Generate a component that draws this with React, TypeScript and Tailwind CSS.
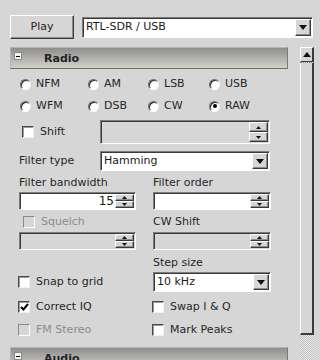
const sunken =
  "border border-t-[#7c7c7c] border-l-[#7c7c7c] border-b-white border-r-white shadow-[inset_1px_1px_0_#3a3a3a]";
const raised =
  "border border-t-white border-l-white border-b-[#3a3a3a] border-r-[#3a3a3a] shadow-[inset_-1px_-1px_0_#8c8c8c]";

function Tri({ up = false, size = "sm" }: { up?: boolean; size?: "sm" | "md" }) {
  const w = size === "sm" ? 5 : 8;
  const h = size === "sm" ? 3 : 5;
  return (
    <svg width={w} height={h} viewBox={`0 0 ${w} ${h}`}>
      <polygon
        points={up ? `0,${h} ${w},${h} ${w / 2},0` : `0,0 ${w},0 ${w / 2},${h}`}
        fill="#111"
      />
    </svg>
  );
}

function SpinBox({
  value = "",
  disabled = false,
  className = "",
}: {
  value?: string;
  disabled?: boolean;
  className?: string;
}) {
  return (
    <div className={`flex ${sunken} ${disabled ? "bg-[#d6d6d6]" : "bg-white"} ${className}`}>
      <div className="flex flex-1 items-center justify-end pr-[1px] text-[12px] text-[#1a1a1a]">
        {value}
      </div>
      <div className="flex w-[20px] flex-col py-[1px] pr-[1px]">
        <div className={`flex flex-1 items-center justify-center bg-[#d6d6d6] ${raised}`}>
          <Tri up />
        </div>
        <div className={`flex flex-1 items-center justify-center bg-[#d6d6d6] ${raised}`}>
          <Tri />
        </div>
      </div>
    </div>
  );
}

function Combo({ text, className = "" }: { text: string; className?: string }) {
  return (
    <div className={`flex bg-white ${sunken} ${className}`}>
      <div className="flex flex-1 items-center pl-[3px] text-[#1a1a1a]">{text}</div>
      <div className={`my-[1px] mr-[1px] flex w-[16px] items-center justify-center bg-[#d6d6d6] ${raised}`}>
        <Tri size="md" />
      </div>
    </div>
  );
}

function Radio({ label, checked = false }: { label: string; checked?: boolean }) {
  return (
    <div className="flex items-center gap-[5px]">
      <div className="flex h-[11px] w-[11px] items-center justify-center rounded-full border border-[#6a6a6a] border-b-white border-r-[#f2f2f2] bg-white shadow-[inset_1px_1px_0_#2a2a2a]">
        {checked && <div className="h-[4px] w-[4px] rounded-full bg-black" />}
      </div>
      <span>{label}</span>
    </div>
  );
}

function Check({
  label,
  checked = false,
  disabled = false,
}: {
  label: string;
  checked?: boolean;
  disabled?: boolean;
}) {
  return (
    <div className="flex items-center gap-[6px]">
      <div
        className={`flex h-[12px] w-[12px] items-center justify-center border ${
          disabled
            ? "border-[#8a8a8a] border-b-white border-r-white bg-[#d6d6d6]"
            : "border-[#4a4a4a] border-b-[#f0f0f0] border-r-[#f0f0f0] bg-white shadow-[inset_1px_1px_0_#9a9a9a]"
        }`}
      >
        {checked && (
          <svg width="9" height="8" viewBox="0 0 9 8">
            <path d="M1 4 L3.5 6.5 L8 1" stroke="#000" strokeWidth="2" fill="none" />
          </svg>
        )}
      </div>
      <span className={disabled ? "text-[#8c8c8c]" : ""}>{label}</span>
    </div>
  );
}

function Header({ title }: { title: string }) {
  return (
    <div className="flex h-[22px] border border-t-[#b4b4b4] border-l-[#b4b4b4] border-b-[#6a6a6a] border-r-[#7a7a7a] bg-gradient-to-b from-[#8e8e8e] to-[#d3d1c9]">
      <div className="ml-[3px] mt-[4px] flex h-[8px] w-[8px] items-center justify-center border border-[#8a8a8a] bg-[#f4f4f4]">
        <div className="h-[1px] w-[4px] bg-black" />
      </div>
      <span className="ml-[22px] mt-[3px] font-bold text-[#222]">{title}</span>
    </div>
  );
}

export default function App() {
  return (
    <div className="h-[360px] w-[320px] overflow-hidden bg-[#d6d6d6] font-['DejaVu_Sans',sans-serif] text-[11px] text-[#262626]">
      <div className="flex items-center gap-[8px] pl-[10px] pt-[15px]">
        <button className={`h-[24px] w-[64px] bg-[#d6d6d6] text-[#222] ${raised}`}>Play</button>
        <Combo text="RTL-SDR / USB" className="h-[21px] w-[231px]" />
      </div>

      <div className="mt-[8px] flex">
        <div className="ml-[10px] w-[278px]">
          <Header title="Radio" />

          <div className="mt-[4px] grid grid-cols-[68px_60px_61px_auto] pl-[10px]">
            {["NFM", "AM", "LSB", "USB", "WFM", "DSB", "CW", "RAW"].map((m) => (
              <div key={m} className="flex h-[22px] items-center">
                <Radio label={m} checked={m === "RAW"} />
              </div>
            ))}
          </div>

          <div className="mt-[3px] flex h-[24px] items-center">
            <div className="w-[90px] pl-[12px]">
              <Check label="Shift" />
            </div>
            <SpinBox disabled className="h-[24px] w-[170px]" />
          </div>

          <div className="mt-[7px] flex h-[20px] items-center">
            <span className="w-[90px] pl-[9px]">Filter type</span>
            <Combo text="Hamming" className="h-[20px] w-[170px]" />
          </div>

          <div className="mt-[5px] grid grid-cols-[117px_118px] gap-x-[17px] pl-[9px]">
            <div className="flex h-[14px] items-center">Filter bandwidth</div>
            <div className="flex h-[14px] items-center">Filter order</div>

            <SpinBox value="15" className="mt-[2px] h-[18px]" />
            <SpinBox className="mt-[2px] h-[18px]" />

            <div className="mt-[4px] flex h-[16px] items-center pl-[4px]">
              <Check label="Squelch" disabled />
            </div>
            <div className="mt-[4px] flex h-[16px] items-center">CW Shift</div>

            <SpinBox disabled className="mt-[2px] h-[18px]" />
            <SpinBox disabled className="mt-[2px] h-[18px]" />

            <div className="mt-[6px] h-[14px]" />
            <div className="mt-[6px] flex h-[14px] items-center">Step size</div>

            <div className="-ml-[1px] mt-[2px] flex h-[20px] items-center">
              <Check label="Snap to grid" />
            </div>
            <Combo text="10 kHz" className="mt-[2px] h-[20px]" />

            <div className="-ml-[1px] mt-[6px] flex h-[18px] items-center">
              <Check label="Correct IQ" checked />
            </div>
            <div className="-ml-[1px] mt-[6px] flex h-[18px] items-center">
              <Check label="Swap I & Q" />
            </div>

            <div className="-ml-[1px] mt-[5px] flex h-[18px] items-center">
              <Check label="FM Stereo" disabled />
            </div>
            <div className="-ml-[1px] mt-[5px] flex h-[18px] items-center">
              <Check label="Mark Peaks" />
            </div>
          </div>

          <div className="mt-[8px]">
            <Header title="Audio" />
          </div>
        </div>

        <div className="ml-[12px] flex w-[14px] flex-col">
          <div className="flex h-[15px] items-center justify-center border border-r-2 border-t-white border-l-white border-b-[#3a3a3a] border-r-[#3a3a3a] bg-[#d6d6d6]">
            <Tri up size="md" />
          </div>
          <div className="h-[1px] border-t border-dotted border-[#888]" />
          <div className="h-[272px] border-b-2 border-l border-r-2 border-b-[#3a3a3a] border-l-white border-r-[#3a3a3a] bg-[#d6d6d6]" />
          <div className="h-[30px] bg-[repeating-conic-gradient(#bdbdbd_0%_25%,#ececec_0%_50%)] bg-[length:2px_2px]" />
        </div>
      </div>
    </div>
  );
}
